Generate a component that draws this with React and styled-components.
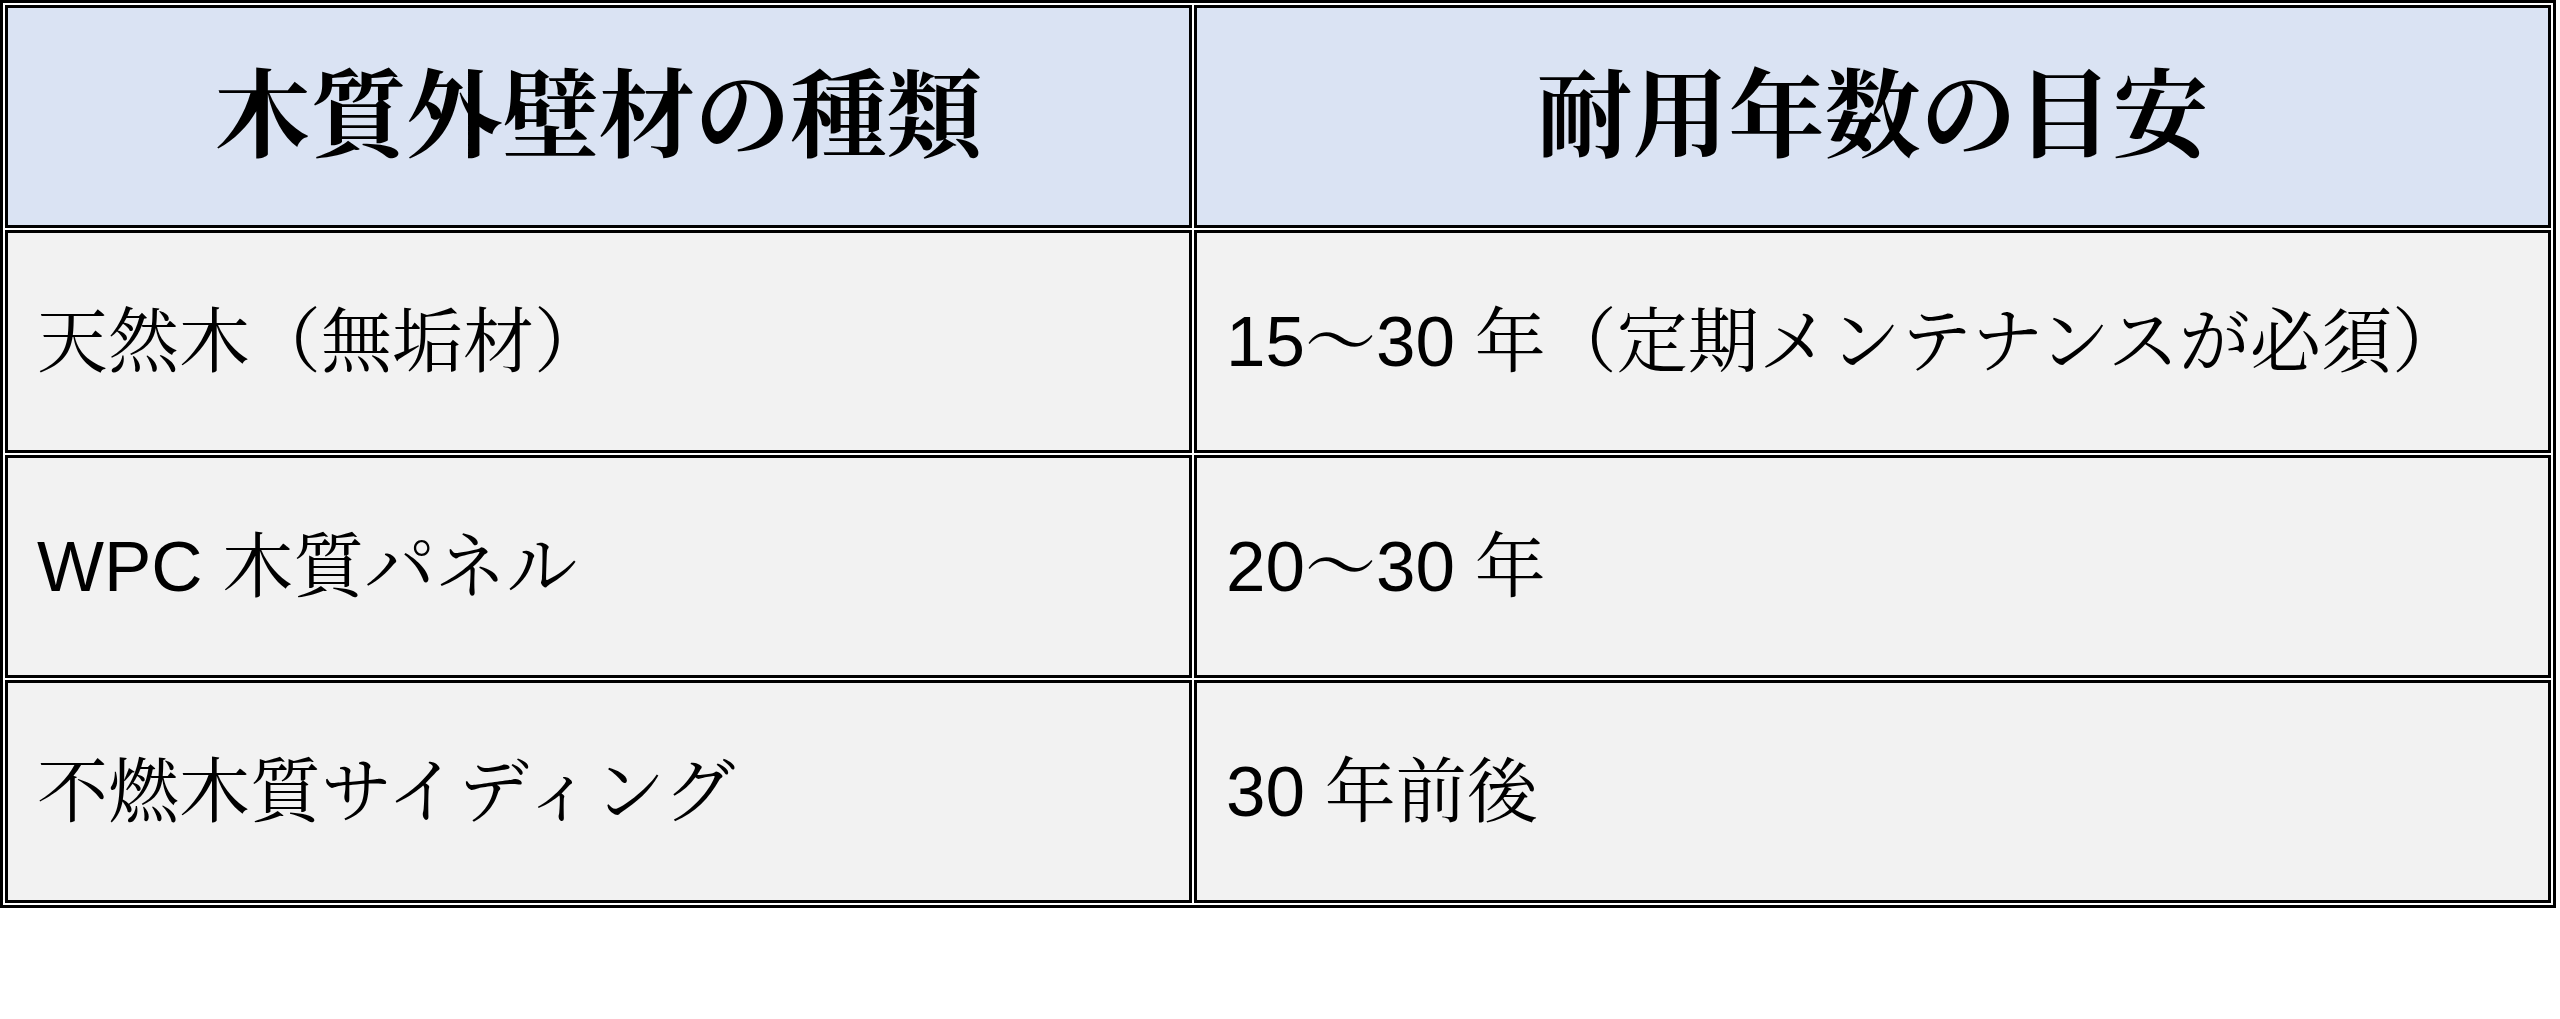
import React from 'react'
import styled, { createGlobalStyle } from 'styled-components'

const GlobalStyle = createGlobalStyle`
	html, body {
		margin: 0;
		padding: 0;
		background: #ffffff;
	}
	body {
		width: 2560px;
		height: 1019px;
		overflow: hidden;
	}
`

const rows = [
	{ kind: '天然木（無垢材）', life: '15～30 年（定期メンテナンスが必須）' },
	{ kind: 'WPC 木質パネル', life: '20～30 年' },
	{ kind: '不燃木質サイディング', life: '30 年前後' },
]

const Table = styled.div`
	display: grid;
	grid-template-columns: 1187px 1357px;
	grid-auto-rows: 223px;
	gap: 2px;
	width: 2556px;
	box-sizing: border-box;
	padding: 2px;
	border: 3px solid #000;
`

const Cell = styled.div`
	display: flex;
	align-items: center;
	box-sizing: border-box;
	border: 3px solid #000;
	color: #000;
	line-height: 1.2;
	white-space: nowrap;
	overflow: hidden;
`

const HeadCell = styled(Cell)`
	justify-content: center;
	padding-bottom: 18px;
	background: #dae3f3;
	font-family: 'Noto Serif CJK JP', 'Noto Sans CJK JP', serif;
	font-size: 96px;
	font-weight: 700;
`

const BodyCell = styled(Cell)`
	justify-content: flex-start;
	padding-left: 29px;
	background: #f2f2f2;
	font-family: 'Liberation Sans', 'Noto Serif CJK JP', 'Noto Sans CJK JP', sans-serif;
	font-size: 71px;
	font-weight: 400;
`

export default function App() {
	return (
		<>
			<GlobalStyle />
			<Table>
				<HeadCell>木質外壁材の種類</HeadCell>
				<HeadCell>耐用年数の目安</HeadCell>
				{rows.map(row => (
					<React.Fragment key={row.kind}>
						<BodyCell>{row.kind}</BodyCell>
						<BodyCell>{row.life}</BodyCell>
					</React.Fragment>
				))}
			</Table>
		</>
	)
}
